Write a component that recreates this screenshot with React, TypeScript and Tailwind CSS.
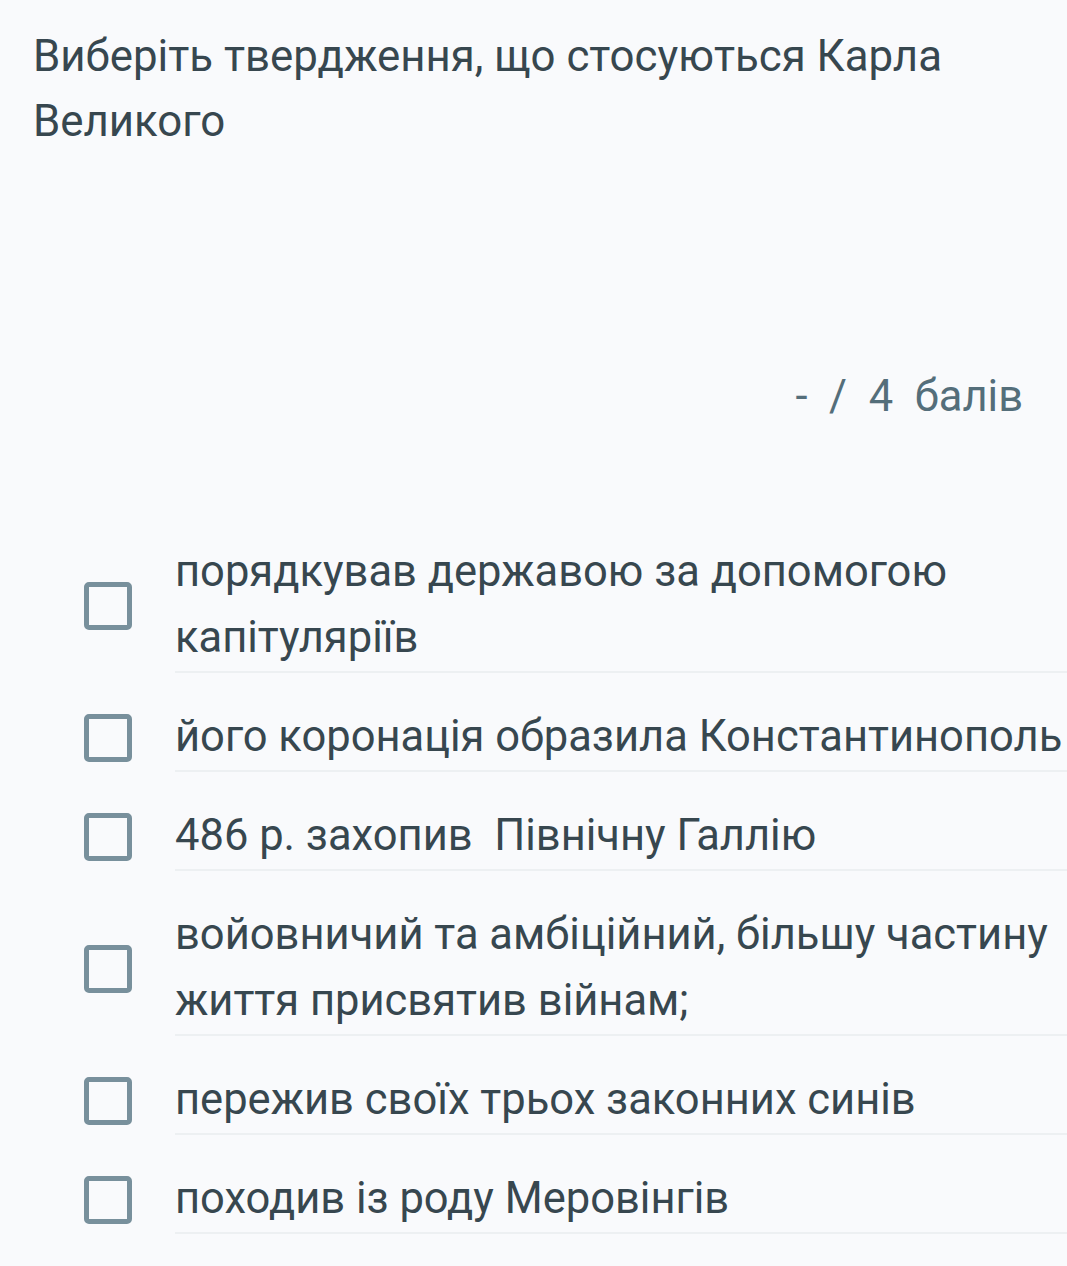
const options = [
  "порядкував державою за допомогою капітуляріїв",
  "його коронація образила Константинополь",
  "486 р. захопив\u00a0 Північну Галлію",
  "войовничий та амбіційний, більшу частину життя присвятив війнам;",
  "пережив своїх трьох законних синів",
  "походив із роду Меровінгів",
];

export default function App() {
  return (
    <div
      className="min-h-screen bg-[#f9fafc] pt-[24px] text-[#37474f]"
      style={{ fontFamily: "Roboto, 'Noto Sans', sans-serif" }}
    >
      {/* питання */}
      <h1 className="pl-[33px] pr-[44px] text-[43.8px] leading-[65px] font-normal">
        Виберіть твердження, що стосуються Карла Великого
      </h1>

      {/* бали */}
      <div className="mt-[210px] pr-[44px] text-right text-[43.5px] leading-[66px] text-[#546e7a] whitespace-pre">
        {"-  /  4  балів"}
      </div>

      {/* варіанти */}
      <div className="mt-[78px]">
        {options.map((text) => (
          <label key={text} className="flex items-stretch pt-[31px] cursor-pointer">
            <div className="w-[175px] shrink-0 flex items-center pl-[84px]">
              <span className="block w-[48px] h-[48px] border-[5px] border-[#78909c] rounded-[5px]" />
            </div>
            <div className="flex-1 border-b-2 border-[#edf0f2] text-[43.5px] leading-[66px]">
              {text}
            </div>
          </label>
        ))}
      </div>
    </div>
  );
}
